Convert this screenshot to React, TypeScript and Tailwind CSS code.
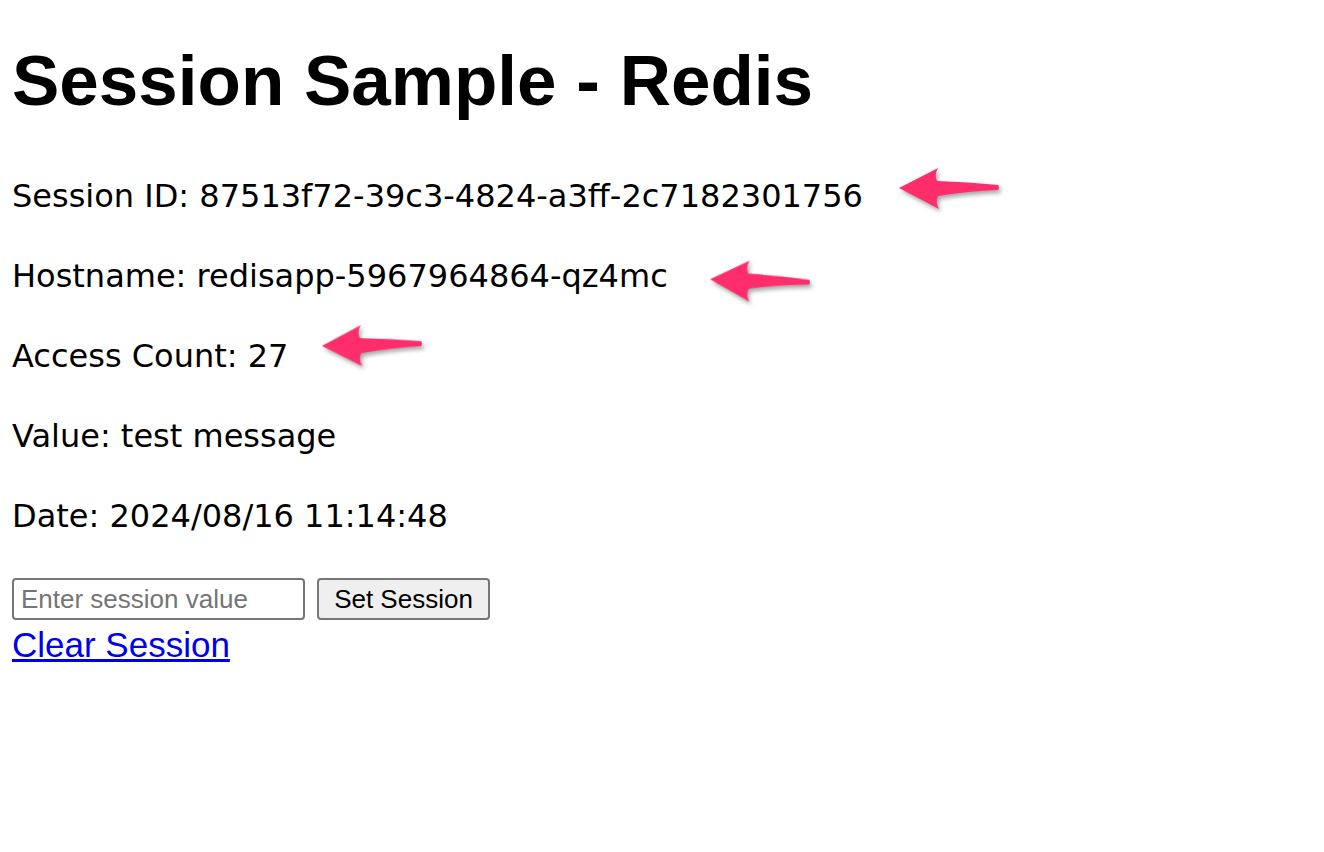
import React from 'react';

// 注記用の矢印（スクリーンショット上の赤い矢印）
const Arrow: React.FC<{ className?: string }> = ({ className }) => (
  <svg
    className={className}
    width="106"
    height="48"
    viewBox="0 0 106 48"
    style={{ filter: 'drop-shadow(2px 3px 2px rgba(0,0,0,0.35))' }}
  >
    <path
      d="M2 23 L41 3 Q37 10 40 16 Q72 17 101 20 Q103 22.5 101 25 Q72 26 41 31 Q38 38 42 44 Z"
      fill="#ff2d6b"
    />
  </svg>
);

const rows = [
  'Session ID: 87513f72-39c3-4824-a3ff-2c7182301756',
  'Hostname: redisapp-5967964864-qz4mc',
  'Access Count: 27',
  'Value: test message',
  'Date: 2024/08/16 11:14:48',
];

export default function App() {
  return (
    <div className="relative min-h-[852px] bg-white px-[12px] text-black">
      <h1
        className="pt-[39px] text-[71px] font-bold leading-[84px]"
        style={{ fontFamily: '"Liberation Sans", Arial, sans-serif' }}
      >
        Session Sample - Redis
      </h1>

      <div
        className="mt-[49px] flex flex-col gap-[32px] text-[32px] leading-[48px]"
        style={{ fontFamily: '"DejaVu Sans", "Noto Sans CJK JP", sans-serif' }}
      >
        {rows.map((r) => (
          <p key={r}>{r}</p>
        ))}
      </div>

      <form
        className="mt-[38px] flex items-center gap-[12px]"
        style={{ fontFamily: '"Liberation Sans", Arial, sans-serif' }}
        onSubmit={(e) => e.preventDefault()}
      >
        <input
          type="text"
          placeholder="Enter session value"
          className="h-[42px] w-[293px] rounded-[4px] border-2 border-[#767676] px-[7px] text-[26px] placeholder:text-[#757575]"
        />
        <button
          type="submit"
          className="h-[42px] w-[173px] rounded-[4px] border-2 border-[#767676] bg-[#efefef] text-[26px]"
        >
          Set Session
        </button>
      </form>
      <a
        href="#"
        className="mt-[2px] block w-fit text-[35px] leading-[46px] text-[#0000ee] underline"
        style={{ fontFamily: '"Liberation Sans", Arial, sans-serif' }}
      >
        Clear Session
      </a>

      <Arrow className="absolute left-[897px] top-[165px]" />
      <Arrow className="absolute left-[708px] top-[258px] rotate-[2deg]" />
      <Arrow className="absolute left-[320px] top-[322px] -rotate-[1deg]" />
    </div>
  );
}
